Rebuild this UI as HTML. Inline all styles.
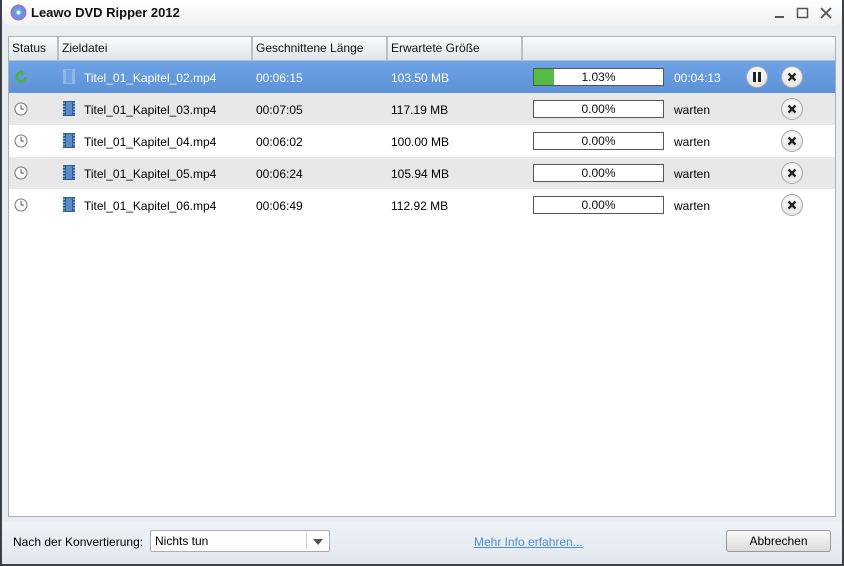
<!DOCTYPE html>
<html><head><style>
*{margin:0;padding:0;box-sizing:border-box}
body{width:844px;height:566px;overflow:hidden;background:#3d4044;font-family:"Liberation Sans",sans-serif;font-size:12px;color:#000;position:relative}
#win{position:absolute;left:2px;top:0;width:840px;height:564px;background:#e9edf1;}
#title{position:absolute;left:0;top:0;width:840px;height:26px;background:linear-gradient(#ffffff,#f0f0f0);border-radius:0 0 10px 10px;}
#title .t{position:absolute;left:29px;top:5px;font-size:13px;font-weight:bold;color:#111}
#list{position:absolute;left:6px;top:36px;width:828px;height:481px;background:#fff;border:1px solid #a9b0b6}
.hdr{position:absolute;left:0;top:0;height:24px;width:826px;background:linear-gradient(#fbfcfd,#dde5ea);border-bottom:1px solid #b8c0c6}
.hc{position:absolute;top:0;height:23px;line-height:22px;padding-left:3px;border-right:2px solid #b9c0c5;color:#111}
.row{position:absolute;left:0;width:826px;height:32px}
.row span{position:absolute;top:10px}
.sel{background:linear-gradient(#6da2e6,#5d93d6);color:#fff}
.g{background:#e8e8e8}
.bar{position:absolute;left:524px;top:7px;width:131px;height:18px;border:1px solid #555;background:#fff;text-align:center;line-height:16px;color:#111}
.btn{position:absolute;width:22px;height:22px;border-radius:50%;background:radial-gradient(circle at 50% 35%,#fff,#ddd);border:1px solid #aaa;top:5px}
#bot{position:absolute;left:0;top:522px;width:840px;height:42px;background:linear-gradient(#eef2f7,#e3e8ee)}
</style></head><body>
<div id="win">
<div id="title">
<svg style="position:absolute;left:8px;top:4px" width="17" height="17"><circle cx="8.5" cy="8.5" r="8" fill="#8a7fd0"/><circle cx="8.5" cy="8.5" r="5" fill="#5aa0e6"/><circle cx="8.5" cy="8.5" r="2" fill="#fff"/></svg>
<div class="t">Leawo DVD Ripper 2012</div>
<svg style="position:absolute;left:770px;top:6px" width="64" height="14"><line x1="3" y1="11" x2="12" y2="11" stroke="#555" stroke-width="2"/><rect x="25.5" y="2.5" width="10" height="9" fill="none" stroke="#555" stroke-width="1.5"/><path d="M49 2L59 12M59 2L49 12" stroke="#555" stroke-width="1.8"/></svg>
</div>
<div id="list">
<div class="hdr">
<div class="hc" style="left:0;width:50px">Status</div>
<div class="hc" style="left:50px;width:194px">Zieldatei</div>
<div class="hc" style="left:244px;width:135px">Geschnittene Länge</div>
<div class="hc" style="left:379px;width:135px">Erwartete Größe</div>
</div>
<div class="row sel" style="top:24px">
<svg style="position:absolute;left:5px;top:9px" width="14" height="14"><path d="M11.5 7A4.5 4.5 0 1 1 7 2.5" fill="none" stroke="#4bb04b" stroke-width="2.5"/><path d="M7 0L11 3L7 6Z" fill="#4bb04b"/></svg>
<svg style="position:absolute;left:54px;top:8px" width="12" height="15"><rect x="0" y="0" width="12" height="15" fill="#8fb7df"/><rect x="3" y="1" width="6" height="13" fill="#6da2e6"/></svg>
<span style="left:75px">Titel_01_Kapitel_02.mp4</span><span style="left:247px">00:06:15</span><span style="left:382px">103.50 MB</span>
<div class="bar"><div style="position:absolute;left:0;top:0;width:20px;height:16px;background:#55bb44"></div><span style="position:relative;top:0">1.03%</span></div>
<span style="left:665px">00:04:13</span>
<div class="btn" style="left:737px"><svg width="20" height="20"><rect x="6" y="5" width="3" height="10" fill="#222"/><rect x="11" y="5" width="3" height="10" fill="#222"/></svg></div>
<div class="btn" style="left:772px"><svg width="20" height="20"><path d="M6.5 6.5L13.5 13.5M13.5 6.5L6.5 13.5" stroke="#222" stroke-width="2.4"/></svg></div>
</div>
<div class="row g" style="top:56px"></div>
<div class="row" style="top:88px"></div>
<div class="row g" style="top:120px"></div>
<div class="row" style="top:152px"></div>
</div>
<div id="bot">
<span style="position:absolute;left:11px;top:13px">Nach der Konvertierung:</span>
<div style="position:absolute;left:148px;top:8px;width:180px;height:22px;background:#fff;border:1px solid #aab;border-radius:2px"><span style="position:absolute;left:4px;top:3px">Nichts tun</span><div style="position:absolute;left:155px;top:2px;height:16px;border-left:1px solid #ccc"></div><div style="position:absolute;left:162px;top:8px;border:5px solid transparent;border-top:6px solid #555"></div></div>
<span style="position:absolute;left:472px;top:13px;color:#4a8fd8;text-decoration:underline">Mehr Info erfahren...</span>
<div style="position:absolute;left:724px;top:8px;width:105px;height:22px;border:1px solid #999;border-radius:3px;background:linear-gradient(#fafafa,#dcdcdc);text-align:center;line-height:20px">Abbrechen</div>
</div>
</div>
<script>
var rows=[["03","00:07:05","117.19 MB"],["04","00:06:02","100.00 MB"],["05","00:06:24","105.94 MB"],["06","00:06:49","112.92 MB"]];
var r=document.querySelectorAll('.row');
rows.forEach(function(d,i){r[i+1].innerHTML='<svg style="position:absolute;left:5px;top:9px" width="14" height="14"><circle cx="7" cy="7" r="6" fill="#fff" stroke="#777"/><path d="M7 3V7H10" stroke="#555" fill="none"/></svg><svg style="position:absolute;left:54px;top:8px" width="12" height="15"><rect width="12" height="15" fill="#2a5f9a"/><rect x="3" y="1" width="6" height="13" fill="#5b8cc4"/><path d="M1 1.5V14" stroke="#dde8f4" stroke-dasharray="1.5 1.5"/><path d="M11 1.5V14" stroke="#dde8f4" stroke-dasharray="1.5 1.5"/></svg><span style="left:75px">Titel_01_Kapitel_'+d[0]+'.mp4</span><span style="left:247px">'+d[1]+'</span><span style="left:382px">'+d[2]+'</span><div class="bar">0.00%</div><span style="left:665px">warten</span><div class="btn" style="left:772px"><svg width="20" height="20"><path d="M6.5 6.5L13.5 13.5M13.5 6.5L6.5 13.5" stroke="#222" stroke-width="2.4"/></svg></div>';});
</script>
</body></html>
